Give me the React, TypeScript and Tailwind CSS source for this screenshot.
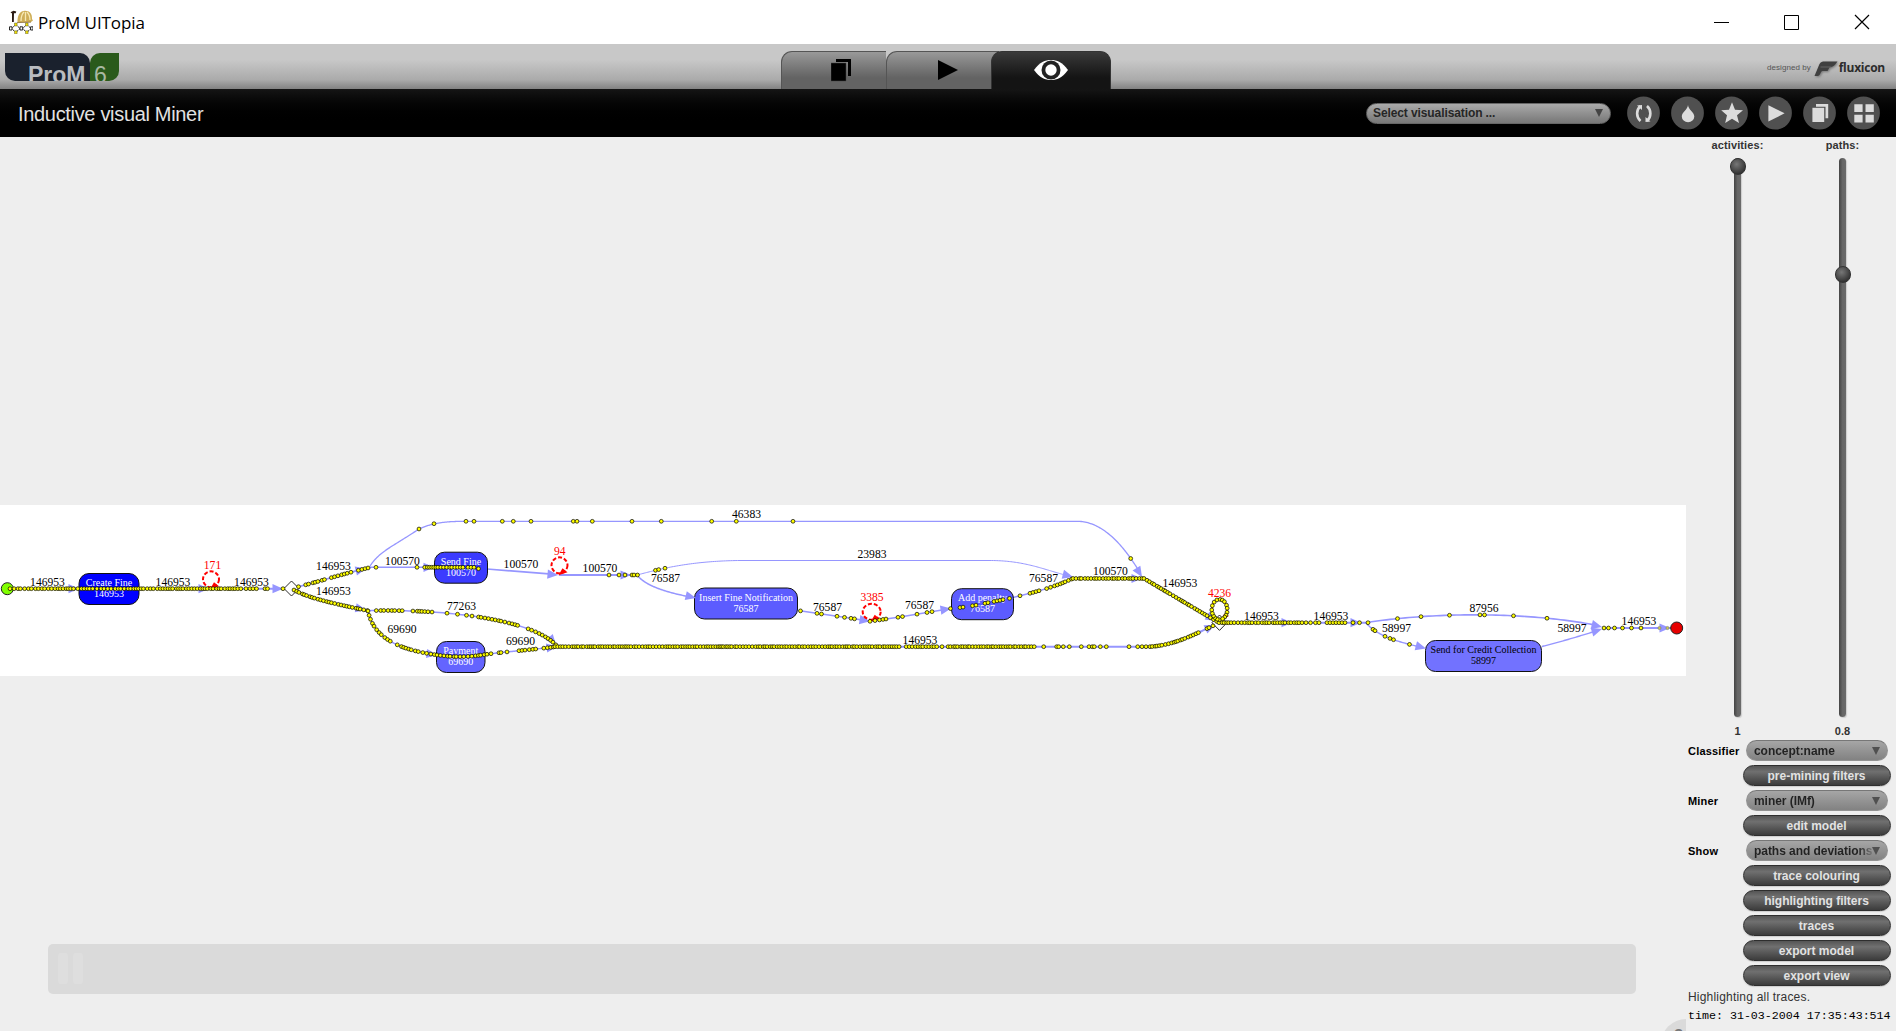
import React from "react";

type P = [number, number];

function cubic(a: P, b: P, c: P, d: P, n = 60): P[] {
  const out: P[] = [];
  for (let i = 0; i <= n; i++) {
    const t = i / n, u = 1 - t;
    out.push([
      u * u * u * a[0] + 3 * u * u * t * b[0] + 3 * u * t * t * c[0] + t * t * t * d[0],
      u * u * u * a[1] + 3 * u * u * t * b[1] + 3 * u * t * t * c[1] + t * t * t * d[1],
    ]);
  }
  return out;
}

// Deterministic spacing between tokens
function rnd(i: number) {
  const s = Math.sin(i * 12.9898) * 43758.5453;
  return s - Math.floor(s);
}

function dense(pts: P[], ranges: [number, number][], step = 2.7): P[] {
  const out: P[] = [];
  let len = 0;
  let next = 0;
  let k = Math.round(pts[0][0]);
  for (let i = 1; i < pts.length; i++) {
    const [x0, y0] = pts[i - 1];
    const [x1, y1] = pts[i];
    const d = Math.hypot(x1 - x0, y1 - y0);
    while (next <= len + d) {
      const t = (next - len) / d;
      const x = x0 + (x1 - x0) * t;
      if (ranges.some(([a, b]) => x >= a && x <= b)) out.push([x, y0 + (y1 - y0) * t]);
      next += step * 1.25 * (0.65 + 0.7 * rnd(k++));
    }
    len += d;
  }
  return out;
}

function at(pts: P[], xs: number[]): P[] {
  return xs.map((x) => {
    for (let i = 1; i < pts.length; i++) {
      if (x <= pts[i][0]) {
        const [x0, y0] = pts[i - 1];
        const [x1, y1] = pts[i];
        return [x, y0 + ((y1 - y0) * (x - x0)) / (x1 - x0 || 1)] as P;
      }
    }
    return [x, pts[pts.length - 1][1]] as P;
  });
}

const start: P[] = [[10, 588.7], [285, 588.7]];
const upA = cubic([291, 588.5], [315, 583], [345, 573], [371, 567.3]);
const downB = cubic([294, 590], [307, 597], [325, 602], [368, 610.7]);
const topC1 = cubic([370, 566], [380, 551], [392, 547], [419, 529]);
const topC2 = cubic([419, 529], [432, 523], [445, 521.3], [466, 521.3]);
const topC3 = cubic([1077, 521.3], [1105, 521.3], [1126, 550], [1139, 571]);
const fineD: P[] = [[370, 567.3], [490, 567.3], [492, 569]];
const joinF: P[] = [[559, 575], [637, 575]];
const insG = cubic([637, 575], [644, 584], [660, 591], [688, 596.5]);
const skipH = cubic([637, 575], [660, 569], [690, 561], [740, 560.5]);
const skipH2 = cubic([990, 560.5], [1025, 560.5], [1045, 570], [1067, 575.5]);
const noteI: P[] = [[798, 610.5], [820, 613.8], [851, 618.3], [870, 621.3]];
const penJ: P[] = [[870, 621.3], [900, 617], [930, 612], [951, 608.5]];
const penK: P[] = [[951, 608.8], [973, 605.7], [995, 601.3], [1009, 598.5], [1030, 593.3], [1047, 588.5], [1060, 584], [1073, 578.5]];
const flatL: P[] = [[1073, 578.5], [1144, 578.5]];
const downM: P[] = [[1144, 578.5], [1218, 622.2]];
const skipN = cubic([368, 610.7], [440, 609], [530, 618], [556, 645]);
const payO = cubic([368, 611], [374, 640], [402, 650], [437, 655]);
const payO2 = cubic([437, 655], [455, 657.5], [470, 657], [485, 654.5]);
const payO3 = cubic([485, 654.5], [507, 651.5], [530, 650], [556, 646.7]);
const longP: P[] = [[555, 646.7], [1150, 646.7]];
const longP2 = cubic([1150, 646.7], [1175, 645], [1193, 635], [1218, 623.5]);
const outQ: P[] = [[1219, 622.7], [1368, 622.7]];
const skipR = cubic([1368, 622.3], [1440, 611.5], [1530, 612.5], [1595, 625]);
const credS = cubic([1366, 623], [1378, 636], [1395, 641], [1418, 646.5]);
const credT = cubic([1542, 646.5], [1560, 642], [1580, 636], [1596, 631]);
const endU: P[] = [[1602, 628], [1672, 628]];

const edges: [P[], number][] = [
  [start, 2], [upA, 1.8], [downB, 1.8], [topC1, 1.3], [topC2, 1.3], [[[466, 521.3], [1077, 521.3]], 1.3], [topC3, 1.3],
  [[[370, 567.3], [434, 567.3]], 1.6], [[[487, 569], [552, 574.2]], 1.7], [joinF, 1.8], [insG, 1.5],
  [skipH, 1], [[[740, 560.5], [990, 560.5]], 1], [skipH2, 1], [noteI, 1.5], [penJ, 1.5], [penK, 1.5],
  [flatL, 1.8], [downM, 2], [skipN, 1.5], [payO, 1.5], [payO3, 1.5], [longP, 2], [longP2, 2], [outQ, 2],
  [skipR, 1.6], [credS, 1.4], [credT, 1.4], [endU, 2],
];

const loop4236: P[] = [];
for (let i = 0; i <= 24; i++) {
  const a = (i / 24) * Math.PI * 2 + Math.PI / 2;
  loop4236.push([1219.5 + Math.cos(a) * 7.8, 609.5 + Math.sin(a) * 10.2]);
}

const tokens: P[] = [
  ...dense(start, [[10, 45], [48, 243]], 2.5),
  ...at(start, [246, 250, 253, 256.5, 265, 267.5, 283]),
  ...dense(upA, [[296, 299], [303, 310], [312, 325], [329, 355], [358, 372]]),
  ...at(fineD, [376]),
  ...dense(downB, [[294, 370]], 2.3),
  [419, 529], [434, 523.7],
  ...[466, 474, 502.3, 513.3, 531, 573.3, 577, 592.3, 632, 661.3, 711.7, 736.3, 793].map((x) => [x, 521.3] as P),
  [1130.7, 558.5],
  ...dense(fineD, [[423, 463]], 2.1),
  ...at(fineD, [417, 468, 471, 474]), [478.5, 568.7],
  ...at(joinF, [609, 619, 625, 632, 634, 637.5]),
  ...at(skipH, [655.5, 658.7, 665]),
  ...at(noteI, [800.5, 817, 821.5, 837, 844.5, 851, 854.5, 870]),
  ...at(penJ, [875, 879.5, 883, 886, 898, 902.5, 917, 927, 932, 950.5]),
  ...at(penK, [960, 963, 972.5, 976, 985, 988, 994, 997, 1000, 1003, 1009.5, 1020, 1030, 1033, 1036, 1039]),
  ...dense(penK, [[1044, 1073]], 2.6),
  ...dense(flatL, [[1073, 1144]], 2.2),
  ...dense(downM, [[1144, 1219]], 2.3),
  ...dense(skipN, [[374, 405], [411, 425]]),
  ...at(skipN, [428, 432, 447, 457.5, 466.5, 472]),
  ...dense(skipN, [[476, 520], [527, 556]]),
  ...dense(payO, [[368, 392], [395, 437]], 2.8),
  ...dense(payO2, [[437, 485]], 2.5),
  ...at(payO3, [487, 491, 499, 501, 507, 519, 522, 525]),
  ...dense(payO3, [[528, 536], [541, 556]]),
  ...dense(longP, [[555, 900], [904, 939], [946, 1037]], 2),
  ...at(longP, [942, 1043.7, 1056.7, 1058.7, 1063.3, 1069.3, 1081.3, 1089, 1092.3, 1094.3, 1100.3, 1106.3, 1129, 1137.7, 1142, 1146]),
  ...dense(longP2, [[1150, 1192], [1193, 1200]], 2.2),
  ...at(longP2, [1207, 1209, 1213]),
  ...dense(outQ, [[1219, 1300]], 2.3),
  ...at(outQ, [1302, 1306, 1310.5, 1315.5, 1319, 1327, 1330, 1333, 1336, 1339, 1342, 1345, 1353, 1359.5, 1368]),
  ...dense(loop4236, [[1200, 1240]], 2.6),
  ...at(skipR, [1397.5, 1421, 1449.5, 1480, 1484.5, 1513.5, 1547]),
  ...at(credS, [1373, 1375, 1385, 1390, 1393.5, 1409.5]),
  ...at(endU, [1604, 1608.5, 1614.5, 1622.5, 1631.5, 1641]),
];

const arrows: [number, number, number][] = [
  [79, 588.7, 0], [209, 588.7, 0], [283, 588.7, 0], [366, 568.5, -14], [366, 610, 12], [434, 567.3, 0], [558, 575, 5],
  [631, 575, 0], [696, 598, 13], [870, 621.3, 9], [951, 608.5, -9], [1073, 577, 15], [1142, 577, 58], [1142, 578.5, 0],
  [1216, 621, 31], [556, 645, 50], [437, 655, 8], [557, 646.5, -8], [1215, 625, -25], [1292, 622.7, 0], [1361, 622.7, 0],
  [1602, 627, 14], [1602, 629, -17], [1426, 648.5, 15], [1670, 628, 0],
];

const labels: [string, number, number, string?][] = [
  ["146953", 47.5, 585.5], ["146953", 173, 585.5], ["146953", 251.5, 585.5], ["171", 212.5, 569, "#f00"],
  ["146953", 333.5, 570], ["146953", 333.5, 595], ["100570", 402.5, 564.5], ["77263", 461.5, 609.5],
  ["69690", 402, 632.5], ["69690", 520.5, 645], ["100570", 521, 567.5], ["94", 559.7, 555, "#f00"],
  ["100570", 600, 572], ["76587", 665.5, 582], ["46383", 746.5, 518], ["23983", 872, 557.5],
  ["76587", 827.5, 610.5], ["3385", 872, 601, "#f00"], ["76587", 919.5, 609], ["146953", 920, 643.5],
  ["76587", 1043.5, 582], ["100570", 1110.5, 575], ["146953", 1180, 586.5], ["4236", 1219.5, 597, "#f00"],
  ["146953", 1261.5, 620], ["146953", 1331, 620], ["58997", 1396.5, 632], ["87956", 1484, 612],
  ["58997", 1572, 632], ["146953", 1639, 625],
];

const boxes: [string, string, number, number, number, string, string][] = [
  ["Create Fine", "146953", 79, 573.5, 60, "#0000ff", "#fff"],
  ["Send Fine", "100570", 434.5, 552.2, 53, "#3b3bff", "#fff"],
  ["Insert Fine Notification", "76587", 694.5, 588, 103, "#5c5cff", "#fff"],
  ["Add penalty", "76587", 951.5, 588.7, 62, "#5c5cff", "#fff"],
  ["Payment", "69690", 436.5, 641.5, 48.5, "#6464ff", "#fff"],
  ["Send for Credit Collection", "58997", 1425.5, 640.5, 116, "#7272ff", "#000"],
];

const redLoops: [number, number, number, number][] = [[211, 579.3, 8, 8], [559.5, 565.3, 8, 8], [871.7, 611.8, 9, 8]];

function ProcessMap() {
  return (
    <svg className="block h-[171px] w-[1686px] shrink-0 bg-white font-['Liberation_Serif',serif]" viewBox="0 505 1686 171">
      {edges.map(([p, w], i) => (
        <polyline key={i} points={p.map((q) => q.join(",")).join(" ")} fill="none" stroke="#9696ff" strokeWidth={w} />
      ))}
      {boxes.map(([a, b, x, y, w, fill, ink]) => (
        <g key={a} fontSize="10" textAnchor="middle">
          <rect x={x} y={y} width={w} height="31" rx="10" fill={fill} stroke="#111" />
          <text x={x + w / 2} y={y + 12.6} fill={ink}>{a}</text>
          <text x={x + w / 2} y={y + 23.7} fill={ink}>{b}</text>
        </g>
      ))}
      {arrows.map(([x, y, r], i) => (
        <path key={i} d="M0 0L-10.500 -4.600V4.600Z" transform={`translate(${x} ${y}) rotate(${r})`} fill="#9696ff" />
      ))}
      <circle cx="7.3" cy="588.7" r="6" fill="#80ff00" stroke="#222" />
      <path d="M291.5 581L299 588.5L291.5 596L284 588.5ZM1219.5 615L1227 622.7L1219.5 630.4L1212 622.7Z" fill="#fff" stroke="#111" strokeWidth=".9" />
      {redLoops.map(([x, y, rx, ry]) => (
        <g key={x}>
          <ellipse cx={x} cy={y} rx={rx} ry={ry} fill="none" stroke="#f00" strokeWidth="2" strokeDasharray="4 2" />
          <path d={`M${x - 1} ${y + 10}L${x + 3} ${y + 3}L${x + 8} ${y + 7}Z`} fill="#f00" />
        </g>
      ))}
      <path d="M1222 619L1224 614L1229 616Z" fill="#f00" />
      <ellipse cx="1219.5" cy="609.5" rx="7.8" ry="10.2" fill="none" stroke="#f00" strokeWidth="1.5" />
      <g fontSize="11.6" textAnchor="middle">
        {labels.map(([t, x, y, c], i) => (
          <text key={i} x={x} y={y} fill={c || "#000"}>{t}</text>
        ))}
      </g>
      <g fill="#ff0" stroke="#000" strokeWidth=".7">
        {tokens.map(([x, y], i) => (
          <circle key={i} cx={x} cy={y} r="1.9" />
        ))}
      </g>
      <circle cx="1676.7" cy="628" r="6" fill="#e60000" stroke="#222" />
      <g fill="#c8c850" stroke="#777" strokeWidth=".6">
        <circle cx="1659.5" cy="628" r="1.6" />
        <circle cx="1667.5" cy="628" r="1.6" />
      </g>
    </svg>
  );
}

function AppIcon() {
  return (
    <svg className="h-6 w-6" viewBox="0 0 24 24">
      <path d="M1.5 2.2L4.5 .8L7.3 1.500L6.700 3.200L5 3.200L4.800 12H3L3 3.400Z" fill="#2b1a14" />
      <path d="M8.500 11.5C8.500 5 11 1 16 .8C21 .8 23.3 4 23 9L24 10.500L22 12L8.500 12.5Z" fill="#cfae58" />
      <path d="M12 11C12 7 13 4 15 2M16.5 11V2M21 10C21 6 20 4 18 2" stroke="#f6e9b5" fill="none" strokeWidth="1.3" />
      <path d="M8 12.6L22 12.2" stroke="#7a5a20" strokeWidth=".7" />
      <path d="M6.800 14.500L11 18.500L6.800 22.500L2.600 18.500ZM17.800 14.500L22 18.500L17.800 22.500L13.600 18.500Z" fill="#fff" stroke="#222" strokeWidth="1" strokeDasharray="2 .8" />
      <path d="M.5 16.800H3V20H.5ZM11 16.800H13.700V20H11ZM21.600 16.800H24V20H21.600Z" fill="#fff" stroke="#111" strokeWidth=".9" />
      <path d="M5.500 13h2.600v3H5.500ZM16.500 13h2.600v3h-2.600ZM5.500 20.800h2.600v3H5.500ZM16.500 20.800h2.600v3h-2.600Z" fill="#f0e000" stroke="#333" strokeWidth=".4" />
    </svg>
  );
}

const toolIcons: React.ReactNode[] = [
  <g key="refresh" fill="none" stroke="#dcdcdc" strokeWidth="2.6">
    <path d="M13.500 10C9 14 9 21 13.500 25M20 25C24.500 21 24.500 14 20 10" />
    <path d="M10 9.500L15 9V14ZM23.500 25.500L18.500 26V21Z" fill="#dcdcdc" stroke="none" />
  </g>,
  <path key="drop" d="M17 9C17.500 14 23.300 16 23.300 20.500A6.200 5.600 0 0 1 10.800 20.500C10.800 16 16.500 14 17 9Z" fill="#dcdcdc" />,
  <path key="star" d="M17 6.300L20 13.700L28 14.300L22 19.200L24 27L17 22.800L10.200 27L12 19.200L6.200 14.300L14 13.700Z" fill="#dcdcdc" />,
  <path key="play" d="M9.400 9.300L25.600 17.300L9.400 25.500Z" fill="#dcdcdc" />,
  <g key="copy" fill="#dcdcdc"><path d="M13 8H25.200V22.300H22.500V10.800H13Z" /><path d="M9.400 11.800H21.200V26H9.400Z" /></g>,
  <path key="grid" d="M7.300 8.200H15.600V16H7.300ZM18.500 8.200H26.800V16H18.500ZM7.300 18.800H15.600V26.600H7.300ZM18.500 18.800H26.800V26.600H18.500Z" fill="#dcdcdc" />,
];

function Slider({ label, value, knob }: { label: string; value: string; knob: number }) {
  return (
    <div className="flex w-[105px] flex-col items-center text-[11px] font-bold text-[#333]">
      <span className="h-[21px] pt-px leading-[15px] tracking-[.1px]">{label}</span>
      <div className="relative h-[559px] w-[7px] shrink-0 rounded-full bg-gradient-to-r from-[#444] via-[#666] to-[#6a6a6a] shadow-[1px_1px_1px_#ccc]">
        <div className="absolute -left-[4px] h-[17px] w-[16px] rounded-full border border-[#333] bg-[radial-gradient(circle_at_40%_35%,#777,#2e2e2e_80%)]" style={{ top: knob }} />
      </div>
      <span className="mt-[7px] leading-[14px]">{value}</span>
    </div>
  );
}

function Dropdown({ children }: { children: string }) {
  return (
    <div className="flex h-[21px] w-[142px] items-center rounded-full border border-[#929292] border-t-[#777] bg-gradient-to-b from-[#a6a6a6] to-[#828282] pr-[8px] pl-[7px] text-[12px] font-bold text-[#222]">
      <span className="w-[118px] shrink-0 bg-gradient-to-r from-[#222] from-88% to-[#777] bg-clip-text leading-5 tracking-[-.05px] whitespace-nowrap text-transparent">{children}</span>
      <svg className="h-2 w-2 shrink-0" viewBox="0 0 8 8"><path d="M0 0H8L4 8Z" fill="#505050" /></svg>
    </div>
  );
}

function PillButton({ children }: { children: string }) {
  return (
    <button className="ml-[57px] h-[21px] w-[148px] rounded-full border border-[#2e2e2e] bg-gradient-to-b from-[#555] via-[#707070] via-30% to-[#3c3c3c] pt-px pr-px text-[12px] leading-[18px] font-bold text-[#e2e2e2] shadow-[0_1px_1px_#ccc]">
      {children}
    </button>
  );
}

function Choice({ label, value }: { label: string; value: string }) {
  return (
    <div className="flex items-center">
      <span className="w-[60px] pt-[2px] pl-[2px] text-[11px] font-bold tracking-[.2px] text-black">{label}</span>
      <Dropdown>{value}</Dropdown>
    </div>
  );
}

export default function App() {
  return (
    <div className="flex h-[1031px] w-[1896px] flex-col overflow-hidden bg-[#eee] font-['Liberation_Sans',Arial,sans-serif]">
      <header className="flex h-[44px] shrink-0 items-center bg-white pl-[9px]">
        <AppIcon />
        <span className="ml-[5px] pt-[2px] font-['Open_Sans',sans-serif] text-[17px] tracking-[-.1px] text-black">ProM UITopia</span>
        <div className="mr-[26px] ml-auto flex items-center gap-[54px]">
          <svg className="h-4 w-4" viewBox="0 0 16 16"><path d="M0 8.500H15" stroke="#000" /></svg>
          <svg className="h-4 w-4" viewBox="0 0 16 16"><path d="M.5 1.500H14.500V15.500H.5Z" fill="none" stroke="#000" /></svg>
          <svg className="h-4 w-4" viewBox="0 0 16 16"><path d="M1 1L15 15M15 1L1 15" stroke="#000" strokeWidth="1.200" /></svg>
        </div>
      </header>

      <div className="flex h-[45px] shrink-0 bg-gradient-to-b from-[#c8c8c8] from-35% via-[#aaa] via-80% to-[#828282] pl-[5px]">
        <div className="mt-[9px] flex h-[28px] w-[115px]">
          <div className="w-[85px] overflow-hidden rounded-tr-[10px] rounded-bl-[10px] bg-[#1a212d] pl-[23px]">
            <span className="block pt-[9px] text-[23px] leading-[26px] font-bold text-[#b9bcc0]">ProM</span>
          </div>
          <div className="w-[29px] overflow-hidden rounded-tl-[10px] rounded-br-[10px] bg-[#2a5a1b] pl-[4px]">
            <span className="block pt-[9px] text-[23px] leading-[26px] text-[#a9b8a2]">6</span>
          </div>
        </div>
        <div className="mt-[7px] ml-[661px] flex h-[38px]">
          <div className="flex w-[105px] justify-center rounded-tl-[11px] border-t border-l border-[#555] bg-gradient-to-b from-[#999] to-[#636363] to-70%">
            <svg className="mt-[6px] ml-[14px] h-6 w-5" viewBox="0 0 20 24"><path d="M5 1H20V18H17V4H5Z" /><path d="M0 5H15V23H0Z" stroke="#444" strokeWidth=".5" /></svg>
          </div>
          <div className="z-0 -mr-2 flex w-[113px] justify-center rounded-tl-[11px] border-t border-l border-[#555] bg-gradient-to-b from-[#999] to-[#636363] to-70%">
            <svg className="mt-[8px] ml-[10px] h-5 w-5" viewBox="0 0 20 20"><path d="M0 0L20 10L0 20Z" /></svg>
          </div>
          <div className="z-10 flex w-[120px] justify-center rounded-t-[11px] border-x border-t border-[#333] bg-gradient-to-b from-[#3a3a3a] to-[#141414] to-70%">
            <svg className="mt-[7px] h-[22px] w-[36px]" viewBox="0 0 36 22">
              <path d="M1 11C7 3 12 1 18 1S29 3 35 11C29 19 24 21 18 21S7 19 1 11Z" fill="#fff" />
              <circle cx="18" cy="11" r="9.500" fill="#222" /><circle cx="18" cy="11" r="5.700" fill="#fff" />
            </svg>
          </div>
        </div>
        <div className="mr-[11px] ml-auto flex h-[22px] self-start pt-[14px]">
          <span className="pt-[3px] text-[8px] leading-[14px] tracking-[.05px] text-[#555]">designed by</span>
          <svg className="mt-[3px] ml-[3px] h-[17px] w-[24px] drop-shadow-[1px_1px_1px_#777]" viewBox="0 0 23 17">
            <path d="M5 3C6 1 8 .5 10 .5H23C20 5 18 6 15 6.500L13 10H8C6 10 6 15 3 15H0L5 3Z" fill="#404040" /><path d="M6 6H17" stroke="#777" strokeWidth=".7" />
          </svg>
          <span className="ml-[1px] font-['Open_Sans',sans-serif] text-[12px] leading-[19px] font-bold tracking-[-.25px] text-[#2c2c2c]">fluxicon</span>
        </div>
      </div>

      <div className="flex h-[48px] shrink-0 items-center bg-gradient-to-b from-[#151515] to-black to-75% pl-[18px]">
        <h1 className="pt-[2px] text-[20px] tracking-[-.32px] text-[#e2e2e2]">Inductive visual Miner</h1>
        <div className="ml-auto flex h-[21px] w-[245px] items-center justify-between rounded-full border border-[#666] bg-gradient-to-b from-[#aaa] to-[#777] pr-[7px] pl-[6px] text-[12px] font-bold text-[#262626]">
          <span className="tracking-[-.1px]">Select visualisation ...</span>
          <svg className="h-2 w-2" viewBox="0 0 8 8"><path d="M0 0H8L4 8Z" fill="#444" /></svg>
        </div>
        <div className="mr-[16px] ml-[16px] flex gap-[11px]">
          {toolIcons.map((icon, i) => (
            <svg key={i} className="h-[34px] w-[33px]" viewBox="0 0 33 34"><ellipse cx="16.500" cy="17" rx="16.400" ry="16.500" fill="#505050" />{icon}</svg>
          ))}
        </div>
      </div>

      <main className="flex min-h-0 flex-1">
        <section className="relative w-[1686px] overflow-hidden pt-[368px]">
          <ProcessMap />
          <div className="mt-[268px] ml-[48px] flex h-[50px] w-[1588px] gap-[5px] rounded-[5px] bg-[#dadada] px-[10px] pt-[9px]">
            <div className="h-[31px] w-[10px] rounded-[3px] bg-[#dedede]" />
            <div className="h-[31px] w-[10px] rounded-[3px] bg-[#dedede]" />
          </div>
          <div className="absolute top-[882px] left-[1661px] h-[50px] w-[50px] rounded-full bg-[#dadada] pt-[7px] pl-[13px] text-[15px] leading-[15px] font-bold text-[#777]">?</div>
        </section>
        <aside className="w-[210px]">
          <div className="-ml-px flex h-[603px]">
            <Slider label="activities:" value="1" knob={0} />
            <Slider label="paths:" value="0.8" knob={108} />
          </div>
          <div className="flex flex-col gap-1">
            <Choice label="Classifier" value="concept:name" />
            <PillButton>pre-mining filters</PillButton>
            <Choice label="Miner" value="miner (IMf)" />
            <PillButton>edit model</PillButton>
            <Choice label="Show" value="paths and deviations" />
            <PillButton>trace colouring</PillButton>
            <PillButton>highlighting filters</PillButton>
            <PillButton>traces</PillButton>
            <PillButton>export model</PillButton>
            <PillButton>export view</PillButton>
          </div>
          <p className="mt-[3px] pl-[2px] text-[12px] leading-[16px] tracking-[.2px] text-[#333]">Highlighting all traces.</p>
          <p className="mt-[3px] pl-[2px] font-['Liberation_Mono',monospace] text-[11.650px] leading-[16px] whitespace-nowrap text-black">time: 31-03-2004 17:35:43:514</p>
        </aside>
      </main>
    </div>
  );
}
